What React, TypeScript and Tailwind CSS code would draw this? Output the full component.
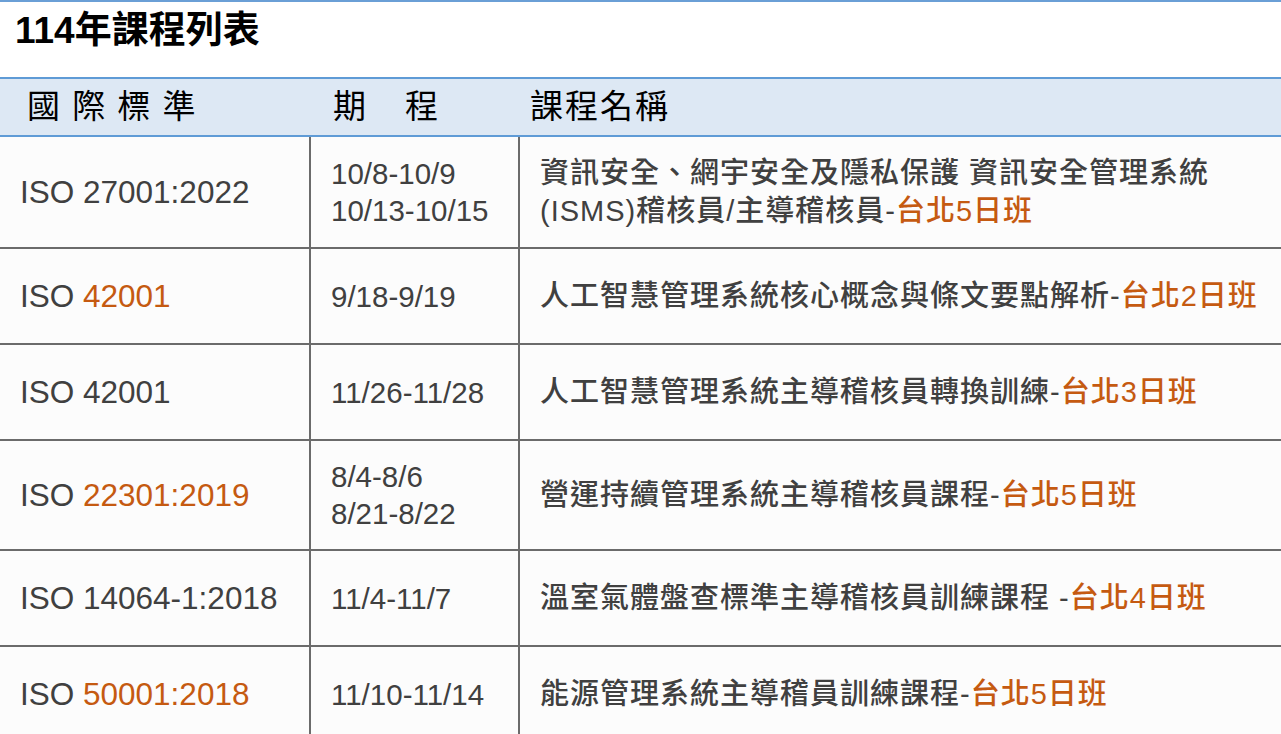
import React from "react"

const font = { fontFamily: '"Liberation Sans", "Noto Sans CJK TC", sans-serif' }

type Row = {
  std: string
  stdHi?: string
  dates: string[]
  name: React.ReactNode
  city: string
}

const rows: Row[] = [
  {
    std: "ISO 27001:2022",
    dates: ["10/8-10/9", "10/13-10/15"],
    name: (
      <>
        資訊安全、網宇安全及隱私保護 資訊安全管理系統
        <br />
        (ISMS)稽核員/主導稽核員-
      </>
    ),
    city: "台北5日班",
  },
  { std: "ISO ", stdHi: "42001", dates: ["9/18-9/19"], name: "人工智慧管理系統核心概念與條文要點解析-", city: "台北2日班" },
  { std: "ISO 42001", dates: ["11/26-11/28"], name: "人工智慧管理系統主導稽核員轉換訓練-", city: "台北3日班" },
  { std: "ISO ", stdHi: "22301:2019", dates: ["8/4-8/6", "8/21-8/22"], name: "營運持續管理系統主導稽核員課程-", city: "台北5日班" },
  { std: "ISO 14064-1:2018", dates: ["11/4-11/7"], name: "溫室氣體盤查標準主導稽核員訓練課程 -", city: "台北4日班" },
  { std: "ISO ", stdHi: "50001:2018", dates: ["11/10-11/14"], name: "能源管理系統主導稽員訓練課程-", city: "台北5日班" },
]

export default function App() {
  return (
    <div className="w-[1281px] bg-white border-t-2 border-[#6a9fd6]" style={font}>
      <div className="h-[75px] pl-[15px] pt-[7px]">
        <h1 className="text-[37px] leading-[44px] font-bold text-black">114年課程列表</h1>
      </div>

      <div className="grid grid-cols-[311px_209px_1fr] h-[60px] items-center bg-[#dde8f4] border-t-2 border-b-2 border-[#5f9bd6] text-black text-[33px] leading-[40px] font-normal">
        <div className="pl-[27px] tracking-[1.5px] whitespace-pre">國 際 標 準</div>
        <div className="pl-[22px] tracking-[3px]">期　程</div>
        <div className="pl-[10px] tracking-[2px]">課程名稱</div>
      </div>

      <div className="bg-[#fcfcfc] text-[#404040]">
        {rows.map((row, i) => (
          <div
            key={i}
            className={`grid grid-cols-[311px_209px_1fr] min-h-[96px] ${i > 0 ? "border-t-2 border-[#6b6b6b]" : ""}`}
          >
            <div className="flex items-center pl-[20px] border-r-2 border-[#6b6b6b] text-[31.5px] leading-[38px]">
              <span>
                {row.std}
                {row.stdHi && <span className="text-[#c55a11]">{row.stdHi}</span>}
              </span>
            </div>
            <div className="flex flex-col justify-center pl-[20px] py-[17px] border-r-2 border-[#6b6b6b] text-[29.5px] leading-[37px]">
              {row.dates.map((d) => (
                <div key={d}>{d}</div>
              ))}
            </div>
            <div className="flex items-center pl-[20px] py-[17px] text-[29px] leading-[38px] tracking-[1px] font-medium whitespace-nowrap">
              <span>
                {row.name}
                <span className="text-[#c55a11]">{row.city}</span>
              </span>
            </div>
          </div>
        ))}
      </div>
    </div>
  )
}
